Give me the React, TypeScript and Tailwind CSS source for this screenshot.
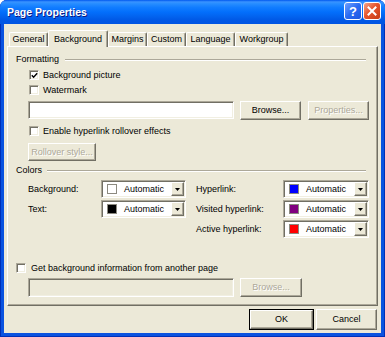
import React from 'react';

const raised =
  'border border-t-white border-l-white border-r-[#716F64] border-b-[#716F64] shadow-[inset_-1px_-1px_0_#ACA899] bg-[#ECE9D8]';
const sunken =
  'border border-t-[#ACA899] border-l-[#ACA899] border-r-white border-b-white shadow-[inset_1px_1px_0_#716F64,inset_-1px_-1px_0_#F1EFE2]';
const disabledText = 'text-[#ACA899] [text-shadow:1px_1px_0_#ffffff]';

function CheckBox({ checked = false }: { checked?: boolean }) {
  return (
    <span className={`w-[10px] h-[10px] shrink-0 bg-white ${sunken} flex items-center justify-center`}>
      {checked && (
        <svg width="7" height="7" viewBox="0 0 7 7">
          <path d="M0.8 3.2 L2.6 5.2 L6.2 1.2" fill="none" stroke="#000" strokeWidth="1.4" />
        </svg>
      )}
    </span>
  );
}

function CheckRow({ label, checked, pl }: { label: string; checked?: boolean; pl: string }) {
  return (
    <div className={`h-[12px] flex items-center ${pl}`}>
      <CheckBox checked={checked} />
      <span className="ml-[4px] leading-none">{label}</span>
    </div>
  );
}

function Button({ label, w, disabled = false }: { label: string; w: string; disabled?: boolean }) {
  return (
    <div className={`${w} h-[19px] shrink-0 ${raised} flex items-center justify-center leading-none ${disabled ? disabledText : ''}`}>
      {label}
    </div>
  );
}

function GroupHeader({ label, gap }: { label: string; gap: string }) {
  return (
    <div className="h-[13px] flex items-center pl-[8px] pr-[11px]">
      <span className="leading-none">{label}</span>
      <div className={`flex-1 ${gap} border-t border-t-[#ACA899] border-b border-b-white`} />
    </div>
  );
}

function ColorDrop({ swatch, w }: { swatch: string; w: string }) {
  return (
    <div className={`${w} h-[18px] shrink-0 bg-white ${sunken} flex items-center`}>
      <span className={`ml-[5px] w-[10px] h-[10px] border border-[#8C8A80] ${swatch}`} />
      <span className="ml-[7px] leading-none">Automatic</span>
      <span className={`ml-auto mr-[1px] w-[13px] h-[14px] ${raised} flex items-center justify-center`}>
        <svg width="5" height="3" viewBox="0 0 5 3">
          <path d="M0 0 H5 L2.5 3 Z" fill="#000" />
        </svg>
      </span>
    </div>
  );
}

function Tab({ label, w, selected = false }: { label: string; w: string; selected?: boolean }) {
  return (
    <div
      className={`${w} ${
        selected ? 'h-[17px] -mb-[1px] z-10' : 'h-[14px]'
      } relative bg-[#ECE9D8] rounded-t-[2px] border-t border-l border-r border-t-white border-l-white border-r-[#716F64] shadow-[inset_-1px_0_0_#ACA899] flex items-center justify-center leading-none`}
    >
      {label}
    </div>
  );
}

export default function App() {
  return (
    <div className="w-[385px] h-[337px] flex flex-col bg-[#0A53E0] rounded-t-[7px] overflow-hidden font-['Liberation_Sans',Arial,sans-serif] text-[9px] text-black shadow-[inset_1px_0_0_#0030B8,inset_-1px_0_0_#0030B8,inset_0_-1px_0_#0030B8]">
      {/* title bar */}
      <div className="h-[24px] shrink-0 flex items-center pl-[7px] pr-[4px] bg-[linear-gradient(to_bottom,#0058EE_0%,#3A93FF_8%,#288EFF_15%,#127DFF_30%,#036FFC_50%,#0262EE_70%,#0057E5_85%,#0054E3_100%)]">
        <span className="text-white font-bold text-[10.5px] leading-none [text-shadow:1px_1px_0_#0A1883]">
          Page Properties
        </span>
        <div className="ml-auto flex gap-[1px] -mt-[2px]">
          <div className="w-[18px] h-[18px] rounded-[3px] border border-white bg-[linear-gradient(135deg,#6FA0FF_0%,#2A6BF2_50%,#1E56E0_100%)] flex items-center justify-center text-white font-bold text-[13px] leading-none">
            ?
          </div>
          <div className="w-[18px] h-[18px] rounded-[3px] border border-white bg-[linear-gradient(135deg,#F2A48A_0%,#E5552E_45%,#C63A12_100%)] flex items-center justify-center">
            <svg width="10" height="10" viewBox="0 0 10 10">
              <path d="M1.5 1.5 L8.5 8.5 M8.5 1.5 L1.5 8.5" stroke="#fff" strokeWidth="2" strokeLinecap="square" />
            </svg>
          </div>
        </div>
      </div>

      {/* body */}
      <div className="flex-1 ml-[4px] mr-[4px] mb-[4px] bg-[#ECE9D8] flex flex-col">
        {/* tabs */}
        <div className="h-[22px] pl-[5px] pt-[6px] flex items-end">
          <Tab label="General" w="w-[39px]" />
          <Tab label="Background" w="w-[60px]" selected />
          <Tab label="Margins" w="w-[39px]" />
          <Tab label="Custom" w="w-[39px]" />
          <Tab label="Language" w="w-[49px]" />
          <Tab label="Workgroup" w="w-[53px]" />
        </div>

        {/* panel */}
        <div className="ml-[3px] w-[371px] h-[260px] border border-t-white border-l-white border-r-[#716F64] border-b-[#716F64] shadow-[inset_-1px_-1px_0_#ACA899] flex flex-col">
          <div className="mt-[6px]">
            <GroupHeader label="Formatting" gap="ml-[6px]" />
          </div>
          <div className="mt-[3px]">
            <CheckRow label="Background picture" checked pl="pl-[21px]" />
          </div>
          <div className="mt-[3px]">
            <CheckRow label="Watermark" pl="pl-[21px]" />
          </div>
          <div className="mt-[5px] h-[19px] flex items-start pl-[20px]">
            <div className={`w-[206px] h-[18px] bg-white ${sunken}`} />
            <div className="ml-[6px]">
              <Button label="Browse..." w="w-[61px]" />
            </div>
            <div className="ml-[7px]">
              <Button label="Properties..." w="w-[61px]" disabled />
            </div>
          </div>
          <div className="mt-[5px]">
            <CheckRow label="Enable hyperlink rollover effects" pl="pl-[21px]" />
          </div>
          <div className="mt-[6px] pl-[20px] flex">
            <div className={`w-[68px] h-[18px] ${raised} flex items-center justify-center leading-none ${disabledText}`}>
              Rollover style...
            </div>
          </div>
          <div className="mt-[3px]">
            <GroupHeader label="Colors" gap="ml-[5px]" />
          </div>

          <div className="mt-[3px] h-[18px] flex items-center pl-[20px]">
            <span className="w-[73px] leading-none">Background:</span>
            <ColorDrop swatch="bg-white" w="w-[85px]" />
            <span className="ml-[10px] w-[87px] leading-none">Hyperlink:</span>
            <ColorDrop swatch="bg-[#0000FF]" w="w-[86px]" />
          </div>
          <div className="mt-[2px] h-[18px] flex items-center pl-[20px]">
            <span className="w-[73px] leading-none">Text:</span>
            <ColorDrop swatch="bg-black" w="w-[85px]" />
            <span className="ml-[10px] w-[87px] leading-none">Visited hyperlink:</span>
            <ColorDrop swatch="bg-[#800080]" w="w-[86px]" />
          </div>
          <div className="mt-[2px] h-[18px] flex items-center pl-[20px]">
            <span className="w-[158px]" />
            <span className="ml-[10px] w-[87px] leading-none">Active hyperlink:</span>
            <ColorDrop swatch="bg-[#FF0000]" w="w-[86px]" />
          </div>

          <div className="mt-[24px] h-[12px] flex items-center pl-[8px]">
            <CheckBox />
            <span className="ml-[5px] leading-none">Get background information from another page</span>
          </div>
          <div className="mt-[4px] h-[19px] flex items-start pl-[20px]">
            <div className={`w-[206px] h-[19px] bg-[#ECE9D8] ${sunken}`} />
            <div className="ml-[6px]">
              <Button label="Browse..." w="w-[62px]" disabled />
            </div>
          </div>
        </div>

        {/* footer buttons */}
        <div className="mt-[3px] flex justify-end pr-[4px] gap-[2px]">
          <div className="w-[65px] h-[21px] border border-black">
            <div className={`w-full h-full ${raised} flex items-center justify-center leading-none`}>OK</div>
          </div>
          <div className={`w-[61px] h-[21px] ${raised} flex items-center justify-center leading-none`}>Cancel</div>
        </div>
      </div>
    </div>
  );
}
